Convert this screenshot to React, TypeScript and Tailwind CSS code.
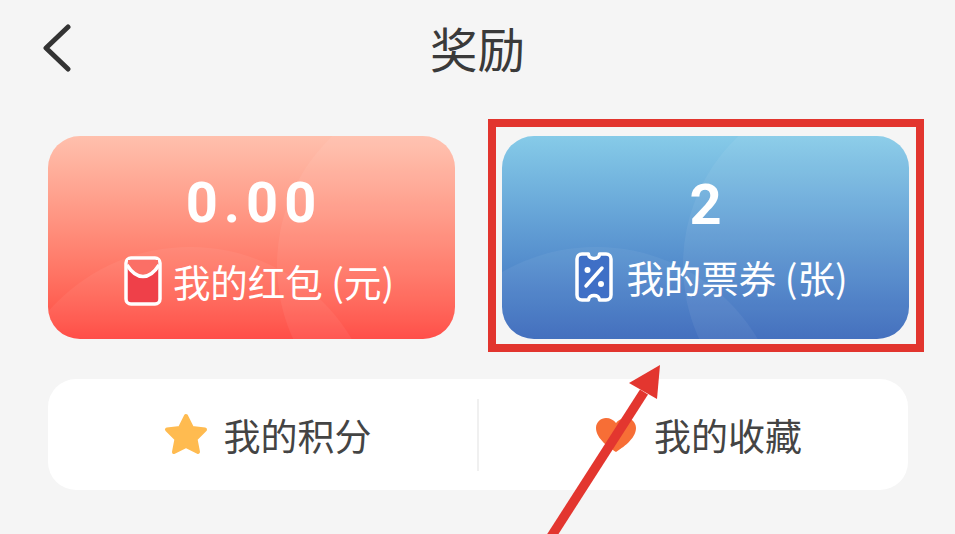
import React from "react";

const cjk = "font-['Noto_Sans_CJK_SC','Noto_Sans',sans-serif]";

function Envelope() {
  return (
    <svg width="38" height="50" viewBox="0 0 38 50" className="shrink-0">
      <rect x="2" y="2" width="34" height="46" rx="5" fill="#ef4049" stroke="#fff" strokeWidth="3.500" />
      <path d="M4 4 H34 V10 C30 17 24 20 19 20 C14 20 8 17 4 10 Z" fill="#fb6f66" />
      <path d="M3 9 C8 17 14 20.500 19 20.500 C24 20.500 30 17 35 9" fill="none" stroke="#fff" strokeWidth="3.500" />
    </svg>
  );
}

function Ticket() {
  return (
    <svg width="38" height="50" viewBox="0 0 38 50" className="shrink-0">
      <path
        d="M7 2 H13.500 C13.500 5 16 6.500 19 6.500 C22 6.500 24.500 5 24.500 2 H31 C34 2 36 4 36 7 V43 C36 46 34 48 31 48 H24.500 C24.500 45 22 43.500 19 43.500 C16 43.500 13.500 45 13.500 48 H7 C4 48 2 46 2 43 V7 C2 4 4 2 7 2 Z"
        fill="#3f6fc6"
        stroke="#fff"
        strokeWidth="3.500"
        strokeLinejoin="round"
      />
      <path d="M27 16 L11 34" stroke="#fff" strokeWidth="3.500" strokeLinecap="round" />
      <circle cx="12.500" cy="18" r="3" fill="#fff" />
      <circle cx="26" cy="32" r="3" fill="#fff" />
    </svg>
  );
}

function Card({
  gradient,
  value,
  label,
  icon,
  valueClass,
  gapClass,
  circleA,
  circleB,
  rowClass,
}: {
  gradient: string;
  value: string;
  label: string;
  icon: React.ReactNode;
  valueClass: string;
  gapClass: string;
  circleA: string;
  circleB: string;
  rowClass: string;
}) {
  return (
    <div className={`relative h-[203px] w-[407px] shrink-0 overflow-hidden rounded-[32px] ${gradient}`}>
      <div className={`absolute top-[-49px] h-[356px] w-[356px] rounded-full bg-white/[0.06] ${circleA}`} />
      <div className={`absolute top-[111px] h-[376px] w-[376px] rounded-full bg-white/[0.05] ${circleB}`} />
      <div className={`relative flex h-full flex-col items-center ${gapClass} text-white`}>
        <div className={`font-['Roboto',sans-serif] text-[56px] font-bold leading-[66px] ${valueClass}`}>{value}</div>
        <div className={`flex items-center ${rowClass}`}>
          {icon}
          <span className={`${cjk} text-[37.500px] leading-[50px]`}>{label}</span>
        </div>
      </div>
    </div>
  );
}

export default function App() {
  return (
    <div className={`relative h-[534px] w-[955px] overflow-hidden bg-[#f5f5f5] ${cjk}`}>
      <header className="grid h-[96px] grid-cols-[1fr_auto_1fr] items-center pl-[42px]">
        <svg width="30" height="48" viewBox="0 0 30 48" fill="none">
          <path d="M26 3 L4 24 L26 45" stroke="#333" strokeWidth="5" strokeLinecap="round" strokeLinejoin="round" />
        </svg>
        <h1 className="text-[47.500px] font-normal leading-[60px] text-[#3a3a3a] -translate-x-[21px]">奖励</h1>
        <div />
      </header>

      <div className="mt-[40px] flex gap-[47px] pl-[48px]">
        <Card
          gradient="bg-gradient-to-b from-[#ffc0ad] to-[#ff443e]"
          value="0.00"
          label="我的红包 (元)"
          icon={<Envelope />}
          valueClass="ml-[5px] tracking-[6px]"
          gapClass="pt-[34px] gap-[20px]"
          circleA="left-[229px]"
          circleB="left-[-46px]"
          rowClass="gap-[11px] pl-[15px]"
        />
        <Card
          gradient="bg-gradient-to-b from-[#86cbe8] to-[#3a68bb]"
          value="2"
          label="我的票券 (张)"
          icon={<Ticket />}
          valueClass=""
          gapClass="pt-[36px] gap-[14px]"
          circleA="left-[181px]"
          circleB="left-[-94px]"
          rowClass="gap-[13px] pl-[12px]"
        />
      </div>

      <div className="ml-[48px] mt-[40px] flex h-[111px] w-[860px] items-center rounded-[28px] bg-white">
        <div className="flex h-[72px] w-[431px] items-center justify-center gap-[16px] border-r-2 border-[#f0f0f0] pl-[10px]">
          <svg width="44" height="42" viewBox="0 0 44 42" className="mt-[-2px]">
            <path
              d="M22 3 L28 15 L41 16.500 L31.500 26 L34 39 L22 33 L10 39 L12.500 26 L3 16.500 L16 15 Z"
              fill="#ffbb50"
              stroke="#ffbb50"
              strokeWidth="4"
              strokeLinejoin="round"
            />
          </svg>
          <span className="text-[37px] leading-[50px] text-[#444]">我的积分</span>
        </div>
        <div className="flex h-[72px] flex-1 items-center justify-center gap-[17px] pl-[10px]">
          <svg width="42" height="36" viewBox="0 0 42 36" className="mt-[1px]">
            <path
              d="M21 35 C15 31 1 22 1 11 C1 5 6 1 11 1 C15 1 19 3 21 6 C23 3 27 1 31 1 C36 1 41 5 41 11 C41 22 27 31 21 35 Z"
              fill="#f76e36"
            />
          </svg>
          <span className="text-[37px] leading-[50px] text-[#444]">我的收藏</span>
        </div>
      </div>

      <div className="absolute left-[488px] top-[119px] h-[233px] w-[436px] border-[8px] border-[#e2352e]" />
      <svg className="absolute left-0 top-0" width="955" height="534" viewBox="0 0 955 534" fill="none">
        <path d="M549 540 L644 392" stroke="#e3362f" strokeWidth="9.500" />
        <path d="M660 365 L629 383 L657 399 Z" fill="#e3362f" />
      </svg>
    </div>
  );
}
